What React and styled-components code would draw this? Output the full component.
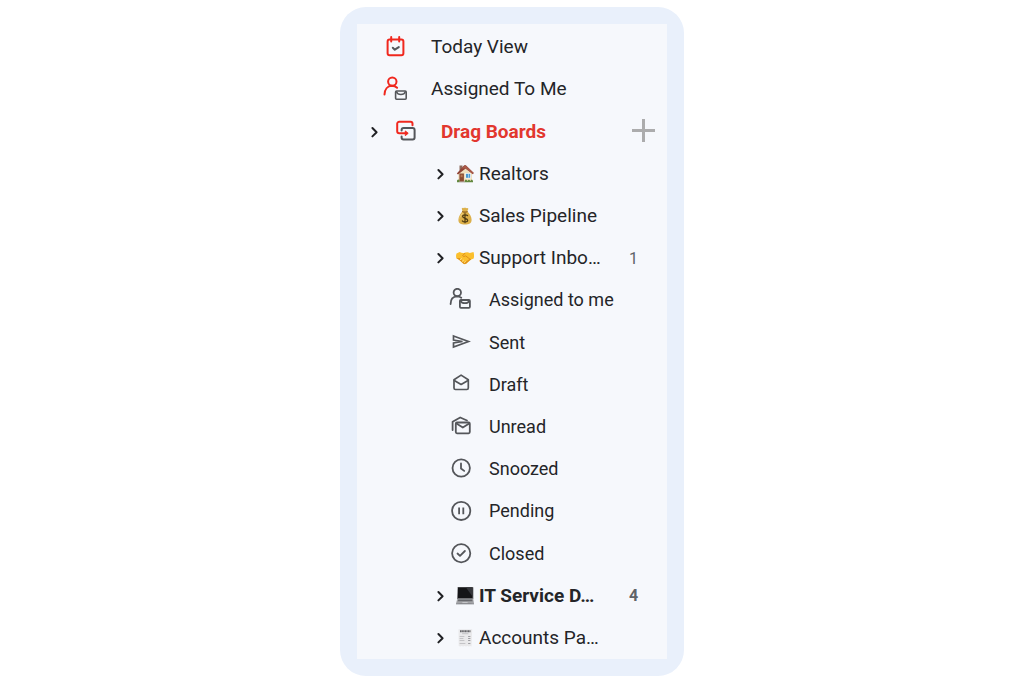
import React from 'react';
import styled, { createGlobalStyle } from 'styled-components';

const RED = '#f0281e';
const GREY = '#54565a';

const GlobalStyle = createGlobalStyle`
  * {
    box-sizing: border-box;
  }

  body {
    margin: 0;
    background: #ffffff;
    color: #242528;
    font-family: Roboto, "Liberation Sans", sans-serif;
  }
`;

const Page = styled.main`
  display: flex;
  justify-content: center;
  min-height: 100vh;
  padding: 7px;
`;

const Card = styled.div`
  display: flex;
  width: 100%;
  max-width: 344px;
  padding: 17px;
  border-radius: 26px;
  background: #e9f0fb;
`;

const Sidebar = styled.nav`
  display: flex;
  flex: 1;
  min-width: 0;
  padding-top: 2px;
  background: #f6f8fc;
`;

const List = styled.ul`
  display: flex;
  flex: 1;
  flex-direction: column;
  min-width: 0;
  margin: 0;
  padding: 0;
  list-style: none;
`;

const Row = styled.li`
  display: flex;
  flex: 1;
  align-items: center;
  min-height: 36px;
  padding-right: 12px;
`;

const TopRow = styled(Row)`
  padding-left: 26px;
`;

const HeadRow = styled(Row)`
  gap: 12px;
  padding-left: 9px;
`;

const BoardRow = styled(Row)`
  gap: 8px;
  padding-left: 75px;
`;

const SubRow = styled(Row)`
  padding-left: 92px;
`;

const RowLink = styled.a`
  display: flex;
  align-items: center;
  gap: ${({ $gap }) => $gap}px;
  color: ${({ $color }) => $color || 'inherit'};
  font-size: ${({ $small }) => ($small ? 18 : 19)}px;
  font-weight: ${({ $bold }) => ($bold ? 700 : 400)};
  line-height: 24px;
  white-space: nowrap;
  text-decoration: none;
`;

const BoardLink = styled(RowLink)`
  flex: 1;
`;

const IconButton = styled.button`
  display: flex;
  padding: 0;
  border: 0;
  background: none;
  color: inherit;
  cursor: pointer;
`;

const AddButton = styled(IconButton)`
  margin-left: auto;
`;

const Count = styled.span`
  width: 26px;
  color: #5f6368;
  font-size: 16px;
  font-weight: ${({ $bold }) => ($bold ? 700 : 400)};
`;

const Drawing = styled.svg`
  display: block;
  flex: none;
  fill: none;
  stroke-width: ${({ $stroke }) => $stroke || 1.6};
  stroke-linecap: round;
  stroke-linejoin: round;
`;

const Icon = ({ size = 24, stroke, children }) => (
  <Drawing width={size} height={size} viewBox={`0 0 ${size} ${size}`} $stroke={stroke} stroke={GREY} aria-hidden="true">
    {children}
  </Drawing>
);

const Chevron = () => (
  <Icon size={16} stroke={2}>
    <path d="M6.4 4 10.6 8.200l-4.200 4.200" stroke="#202124" />
  </Icon>
);

const Plus = () => (
  <Icon size={26} stroke={3}>
    <path d="M14.500 0v23M3 11.500h23" stroke="#acacad" strokeLinecap="butt" />
  </Icon>
);

const TodayIcon = () => (
  <Icon size={26} stroke={2}>
    <rect x="4.6" y="5.4" width="15.8" height="15.8" rx="2" stroke={RED} />
    <path d="M8.2 3v4.4M16.2 3v4.4" stroke={RED} />
    <path d="m9.8 13.8 2 1.900 4-2.600" />
  </Icon>
);

const AssigneeIcon = () => (
  <Icon size={26}>
    <circle cx="9.3" cy="5.6" r="4.2" stroke={RED} strokeWidth="2" />
    <path d="M1.5 18.6c.1-5 3-8.6 7.4-8.8 2.2 0 4 .8 5.2 2" stroke={RED} strokeWidth="2" />
    <rect x="12.6" y="15" width="10.6" height="8.2" rx="1" />
    <path d="M13.5 15.8c.6 1.8 2.3 2.7 4.4 2.7s3.800-.9 4.400-2.700" strokeWidth="1.4" />
  </Icon>
);

const BoardsIcon = () => (
  <Icon stroke={2}>
    <path d="M7.600 10.500V10a2 2 0 0 1 2-2h9a2 2 0 0 1 2 2v7.500a2 2 0 0 1-2 2h-9a2 2 0 0 1-2-2V16.500" />
    <path d="M18.500 5.200V3.800a2 2 0 0 0-2-2H5.200a2 2 0 0 0-2 2v7.500a2 2 0 0 0 2 2H12" stroke={RED} />
    <path d="m11.600 11.200 2.600 2.100-2.600 2.100z" fill={RED} stroke={RED} strokeWidth="1" />
  </Icon>
);

const AssignedIcon = () => (
  <Icon stroke={1.800}>
    <circle cx="8.300" cy="4.500" r="3.700" />
    <path d="M1.600 16c0-4.500 2.500-7.500 6.400-7.700 1.700 0 3.200.5 4.300 1.400" />
    <rect x="10.900" y="12" width="10" height="7.800" rx="1" />
    <path d="M11.600 12.800c.7 1.600 2.200 2.400 4.300 2.400s3.600-.8 4.300-2.400" />
  </Icon>
);

const SentIcon = () => (
  <Icon stroke={1.700}>
    <path d="M4.500 5 19.500 10.500 4.500 16v-4L13.500 10.500 4.500 9z" strokeLinejoin="miter" />
  </Icon>
);

const DraftIcon = () => (
  <Icon stroke={1.700}>
    <path d="M5 6.700 12.100 2.100l7.200 4.600v8.300a1.500 1.500 0 0 1-1.500 1.500H6.500A1.500 1.500 0 0 1 5 15z" />
    <path d="m5.300 7.500 6.800 4L19 7.500" />
  </Icon>
);

const UnreadIcon = () => (
  <Icon stroke={1.800}>
    <path d="M3.600 15V6.700L11.200 2.500l6.800 3" />
    <rect x="6.800" y="7.500" width="14" height="10.800" rx="1.200" />
    <path d="m7.500 8.500 6.300 4 6.400-4" />
  </Icon>
);

const SnoozedIcon = () => (
  <Icon stroke={1.800}>
    <circle cx="12.200" cy="11" r="8.700" />
    <path d="M12 6.500v5l3.200 2.400" />
  </Icon>
);

const PendingIcon = () => (
  <Icon stroke={1.800}>
    <circle cx="12.200" cy="11.900" r="9.100" />
    <path d="M10.100 8.500v6.800M14.300 8.500v6.800" strokeLinecap="butt" />
  </Icon>
);

const ClosedIcon = () => (
  <Icon stroke={1.800}>
    <circle cx="12.200" cy="11.200" r="9.100" />
    <path d="m8.500 11.500 2.500 2.400 4.900-4.900" />
  </Icon>
);

const House = () => (
  <Icon size={18}>
    <g stroke="none">
      <path d="M3.500.5h3v5h-3z" fill="#8d6a5c" />
      <path d="M2.300 7.500 9.500 2l6.500 5.500v9H2.300z" fill="#f0dfbd" />
      <path d="M8.200.3h1.700L17.800 8l-1 1.200L9.700 3.500 2 9.500.8 8.600z" fill="#8f4336" />
      <path d="M5.500 3.500 9.300.3l8.500 7.600-1.500.6-7-5z" fill="#a95a49" />
      <path d="M3.400 8.500h4.500v8.300H3.400z" fill="#8a4b32" />
      <path d="M4.600 9.700h2v2.500h-2z" fill="#b97850" />
      <path d="M9.300 8.200h5.500v5.200H9.300z" fill="#fff" />
      <path d="M9.900 8.800h4.300v4H9.900z" fill="#4a98d0" />
      <path d="M12 8.800h.5v4H12z" fill="#e9f5fb" />
      <path d="M1 15.500q1.300-2.200 2.600 0v1.700H1zM8.500 16q1.400-3 3 0 1.500-2.500 2.800 0 1.700-3 2.700 0v1.200H8.500z" fill="#62883e" />
      <path d="M3.500 16.500h5.300v.9H3.500z" fill="#a8a39a" />
    </g>
  </Icon>
);

const MoneyBag = () => (
  <Icon size={18}>
    <g stroke="none">
      <path d="M6.500 4.200 5.700 1.500Q7 .3 8 1.300q1-1.500 2 0 1.500-1 2.400.4l-1.100 2.500C13.800 6.800 15.800 10 15.600 13.200c-.2 3-2.400 4.200-6.600 4.200s-6.500-1.200-6.600-4.200C2.300 10 4.200 6.800 6.500 4.200z" fill="#dcb04a" />
      <path d="M6.400 4c1 .8 4 .8 5 0l.4.8c-1.400 1.200-4.400 1.200-5.800 0z" fill="#85591c" />
      <path d="M5.800 6.500C4.400 8.400 3.500 10.500 3.500 12.800c.8-3.500 2-5 4.200-6.500z" fill="#f4d98a" />
      <path d="M11.600 8.700C10.800 7.700 6.600 7.300 6.600 9.600c0 2.200 5.100 1.200 5.100 3.700 0 2.300-4.400 2-5.400.6M9 6.700v9" fill="none" stroke="#4e3b12" strokeWidth="1.200" />
    </g>
  </Icon>
);

const Handshake = () => (
  <Icon size={18}>
    <g stroke="none">
      <path d="M.5 4.500 3.700 3Q6 4.500 8.800 3.800q2.600-1 5 .2l3.700-1q1 3.500.2 6.500l-3 1.200-4.500 4q-1.500.9-3-.1L3 10.700.3 9.200q-.6-2.500.2-4.700z" fill="#fbbf2d" />
      <path d="m.5 9.200 2.700 1.500 4 3.800q1.500 1 3 .1l4.500-4-.5-1-4.700 3.400q-1 .5-2-.1L3.500 9z" fill="#df921d" />
      <path d="M9 4.200 6.600 6.700q.8 1.600 3.100.2l4.700 3.600" fill="none" stroke="#d98a17" strokeWidth=".9" />
      <path d="m4.300 10.600 1.300-1M6.300 12.300l1.200-1M8.500 13.500l.9-.8" stroke="#ffe08a" strokeWidth="1" />
    </g>
  </Icon>
);

const Laptop = () => (
  <Icon size={18}>
    <g stroke="none">
      <path d="M1.600 0h15q.8 0 .8.700v11.300H1z" fill="#6c6c6f" />
      <path d="M2 .5h14.500v10.600H2z" fill="#151517" />
      <path d="M10 .5h6.500v9z" fill="#35363a" />
      <path d="M1.300 11.800h15.900l.8 4.700q-9 1-18 0z" fill="#a3a4a7" />
      <path d="M2.200 12.500h14l.3 1.800H1.900z" fill="#67686c" />
      <path d="M6.500 15h5l.3 1.300H6.200z" fill="#c4c5c8" />
      <path d="M0 16.400h18v.9H0z" fill="#77787c" />
    </g>
  </Icon>
);

const Receipt = () => (
  <Icon size={18}>
    <path d="M2.500.2h13.700L15.500 17.500l-1.400-.6-1.300.6-1.500-.6-1.300.6-1.500-.6-1.400.6-1.400-.6-1.500.6-1.500-.6z" fill="#e9e9eb" stroke="none" />
    <path d="M4 2.300h10.500" stroke="#666669" strokeWidth="2" strokeDasharray="1.300 .3" strokeLinecap="butt" />
    <path d="M6.500 4.700h5.500M4 7.500h4M4 9.500h3M4 11.500h4M4 14.500h5" stroke="#b4b4b7" strokeWidth=".7" />
    <path d="M12.500 7.500h1.500M12.500 9.500h1.500M12.500 11.500h1.500M12.500 14.500h1.500" stroke="#8c8c90" strokeWidth=".8" />
  </Icon>
);

const topLinks = [
  { label: 'Today View', icon: <TodayIcon /> },
  { label: 'Assigned To Me', icon: <AssigneeIcon /> },
];

const boards = [
  { label: 'Realtors', icon: <House /> },
  { label: 'Sales Pipeline', icon: <MoneyBag /> },
  { label: 'Support Inbo…', icon: <Handshake />, count: 1 },
];

const folders = [
  { label: 'Assigned to me', icon: <AssignedIcon /> },
  { label: 'Sent', icon: <SentIcon /> },
  { label: 'Draft', icon: <DraftIcon /> },
  { label: 'Unread', icon: <UnreadIcon /> },
  { label: 'Snoozed', icon: <SnoozedIcon /> },
  { label: 'Pending', icon: <PendingIcon /> },
  { label: 'Closed', icon: <ClosedIcon /> },
];

const moreBoards = [
  { label: 'IT Service D…', icon: <Laptop />, count: 4, bold: true },
  { label: 'Accounts Pa…', icon: <Receipt /> },
];

const Board = ({ label, icon, count, bold }) => (
  <BoardRow>
    <IconButton type="button" aria-label={`Toggle ${label}`}>
      <Chevron />
    </IconButton>
    <BoardLink href="#" $gap={5} $bold={bold}>
      {icon}
      {label}
    </BoardLink>
    {count && <Count $bold={bold}>{count}</Count>}
  </BoardRow>
);

const App = () => {
  return (
    <>
      <GlobalStyle />
      <Page>
        <Card>
          <Sidebar aria-label="Boards">
            <List>
              {topLinks.map(({ label, icon }) => (
                <TopRow key={label}>
                  <RowLink href="#" $gap={22}>
                    {icon}
                    {label}
                  </RowLink>
                </TopRow>
              ))}
              <HeadRow>
                <IconButton type="button" aria-label="Toggle boards">
                  <Chevron />
                </IconButton>
                <RowLink href="#" $gap={23} $color="#e2372e" $bold>
                  <BoardsIcon />
                  Drag Boards
                </RowLink>
                <AddButton type="button" aria-label="Add board">
                  <Plus />
                </AddButton>
              </HeadRow>
              {boards.map((board) => (
                <Board key={board.label} {...board} />
              ))}
              {folders.map(({ label, icon }) => (
                <SubRow key={label}>
                  <RowLink href="#" $gap={16} $small>
                    {icon}
                    {label}
                  </RowLink>
                </SubRow>
              ))}
              {moreBoards.map((board) => (
                <Board key={board.label} {...board} />
              ))}
            </List>
          </Sidebar>
        </Card>
      </Page>
    </>
  );
};

export default App;
